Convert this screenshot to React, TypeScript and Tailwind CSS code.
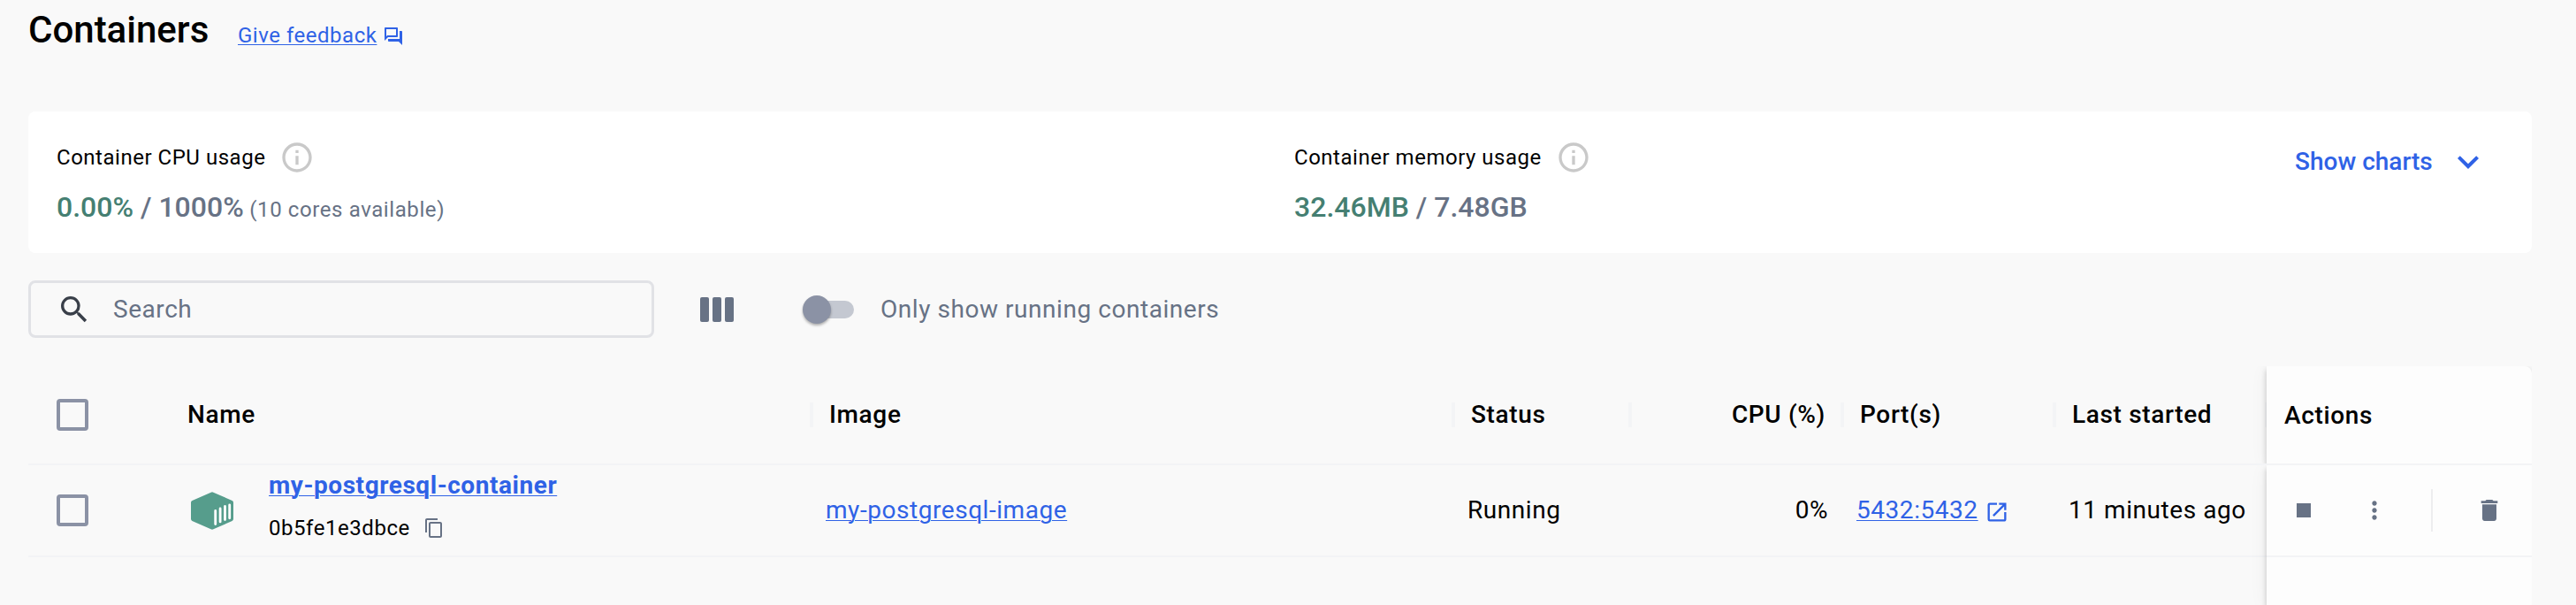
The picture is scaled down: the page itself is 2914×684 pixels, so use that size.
import React from "react";
import {
  MdInfoOutline,
  MdSearch,
  MdStop,
  MdMoreVert,
  MdDelete,
  MdOpenInNew,
  MdOutlineQuestionAnswer,
  MdContentCopy,
  MdExpandMore,
} from "react-icons/md";

function Usage({ label, used, total, note }: { label: string; used: string; total: string; note?: string }) {
  return (
    <div className="w-[1400px] pt-[32px]">
      <div className="flex h-[40px] items-center text-[24px] tracking-[0.52px] text-black">
        <span>{label}</span>
        <MdInfoOutline className="ml-[16px] size-[40px] text-[#c9c9c9]" />
      </div>
      <div className="mt-[14px] h-[44px] whitespace-pre text-[32px] font-medium leading-[44px] text-[#677285]">
        <span className="text-[#457f72]">{used}</span>
        {" / "}
        {total}
        {note && <span className="text-[24px] font-normal tracking-[0.6px]"> {note}</span>}
      </div>
    </div>
  );
}

function Checkbox() {
  return <span className="block size-[36px] rounded-[4px] border-4 border-[#8b92a5]" />;
}

function Divider() {
  return <span className="h-[28px] w-[4px] shrink-0 bg-[#f3f4f6]" />;
}

function ContainerIcon() {
  return (
    <svg viewBox="0 0 48 43" className="ml-[4px] h-[43px] w-[48px] shrink-0">
      <path
        d="M22.600.700a3 3 0 0 1 2.800 0l21.200 9.300A2.400 2.400 0 0 1 48 12.200v18.600a2.400 2.400 0 0 1-1.400 2.200L25.400 42.300a3 3 0 0 1-2.800 0L1.400 33A2.400 2.400 0 0 1 0 30.800V12.200A2.400 2.400 0 0 1 1.400 10z"
        fill="#569d8c"
      />
      <path d="M27.700 21.500v15M33.100 18.900v15M38.500 16.500v15M43.700 14.800v15" stroke="#fff" strokeWidth="2.800" strokeLinecap="round" />
    </svg>
  );
}

const columns = "grid grid-cols-[180px_704px_726px_200px_240px_240px_242px] items-center";
const link = "text-[#2f62e6] underline decoration-1 underline-offset-[2px]";

export default function App() {
  return (
    <div className="h-[684px] w-full overflow-hidden bg-[#f9f9f9] px-[32px] font-[Roboto,sans-serif] text-black">
      <header className="flex h-[126px] items-start">
        <h1 className="w-[237px] pt-[6px] text-[42px] font-medium leading-[56px]">Containers</h1>
        <a className="mt-[24px] flex items-center text-[24px] leading-[32px] tracking-[0.52px] text-[#2f62e6]">
          <span className={link}>Give feedback</span>
          <MdOutlineQuestionAnswer className="ml-[7px] mt-[2px] size-[24px]" />
        </a>
      </header>

      <section className="flex h-[160px] w-[2832px] rounded-[8px] bg-white pl-[32px]">
        <Usage label="Container CPU usage" used="0.00%" total="1000%" note="(10 cores available)" />
        <div className="w-[1132px]">
          <Usage label="Container memory usage" used="32.46MB" total="7.48GB" />
        </div>
        <button className="flex h-[113px] items-center text-[28px] font-medium text-[#2f62e6]">
          Show charts
          <MdExpandMore className="ml-[16px] size-[48px]" />
        </button>
      </section>

      <div className="mt-[31px] flex h-[65px] items-center text-[28px] tracking-[0.55px] text-[#677285]">
        <div className="flex h-[65px] w-[708px] items-center rounded-[8px] border-[3px] border-[#e1e2e6] pl-[29px]">
          <MdSearch className="size-[40px] text-[#393f49]" />
          <span className="ml-[24px]">Search</span>
        </div>
        <span className="ml-[52px] flex gap-[4px] pt-px">
          <i className="h-[28px] w-[10px] rounded-[2px] bg-[#677285]" />
          <i className="h-[28px] w-[10px] rounded-[2px] bg-[#677285]" />
          <i className="h-[28px] w-[10px] rounded-[2px] bg-[#677285]" />
        </span>
        <span className="ml-[94px] mt-px flex h-[20px] w-[42px] items-center rounded-r-full bg-[#c4c8d1]">
          <i className="-ml-[16px] size-[32px] shrink-0 rounded-full bg-[#8b92a5] shadow-[0_2px_3px_rgba(0,0,0,0.3)]" />
        </span>
        <span className="ml-[30px]">Only show running containers</span>
      </div>

      <main className="mt-[32px] flex h-[270px] w-[2832px]">
        <div className="w-[2532px]">
          <div className={`${columns} h-[112px] border-b-2 border-[#f3f4f6] text-[28px] font-medium tracking-[0.65px]`}>
            <div className="pl-[32px]"><Checkbox /></div>
            <div>Name</div>
            <div className="flex items-center"><Divider /><span className="ml-[18px]">Image</span></div>
            <div className="flex items-center"><Divider /><span className="ml-[18px]">Status</span></div>
            <div className="flex items-center"><Divider /><span className="ml-auto mr-[17px]">CPU (%)</span></div>
            <div className="flex items-center"><Divider /><span className="ml-[18px]">Port(s)</span></div>
            <div className="flex items-center">
              <Divider />
              <span className="ml-[18px] mr-auto">Last started</span>
              <span className="h-[28px] w-[2px] bg-[#f3f4f6]" />
            </div>
          </div>
          <div className={`${columns} h-[104px] border-b-2 border-[#f3f4f6] text-[28px] tracking-[0.55px]`}>
            <div className="pl-[32px]"><Checkbox /></div>
            <div className="flex items-center">
              <ContainerIcon />
              <div className="-mt-px mb-[7px] ml-[40px]">
                <div className={`text-[28px] font-bold leading-[48px] ${link}`}>my-postgresql-container</div>
                <div className="flex h-[48px] items-center text-[24px] tracking-[0.55px]">
                  0b5fe1e3dbce
                  <MdContentCopy className="ml-[15px] size-[24px] text-[#677285]" />
                </div>
              </div>
            </div>
            <div className={`pl-[18px] ${link}`}>my-postgresql-image</div>
            <div className="pl-[18px]">Running</div>
            <div className="pr-[14px] text-right">0%</div>
            <div className="flex items-center pl-[18px] text-[#2f62e6]">
              <span className={link}>5432:5432</span>
              <MdOpenInNew className="ml-[7px] mt-[4px] size-[28px]" />
            </div>
            <div className="pl-[18px]">11 minutes ago</div>
          </div>
        </div>
        <aside className="w-[300px]">
          <div className="flex h-[110px] items-center rounded-tr-[8px] bg-[#fdfdfd] pl-[20px] pt-[2px] text-[28px] font-medium tracking-[0.65px] shadow-[0_4px_6px_rgba(0,0,0,0.2),0_2px_20px_rgba(0,0,0,0.06)] [clip-path:inset(0_0_0_-20px)]">
            Actions
          </div>
          <div className="h-[2px] bg-[#f3f4f6]" />
          <div className="h-[158px] bg-[#fdfdfd] shadow-[0_4px_6px_rgba(0,0,0,0.2),0_2px_20px_rgba(0,0,0,0.06)] [clip-path:inset(0_0_0_-20px)]">
            <div className="flex h-[104px] items-center border-b-2 border-[#f3f4f6] pl-[26px] text-[#677285]">
              <MdStop className="size-[32px]" />
              <MdMoreVert className="ml-[48px] size-[32px]" />
              <span className="ml-[48px] h-[48px] w-[2px] bg-[#ededef]" />
              <MdDelete className="ml-[48px] size-[32px]" />
            </div>
          </div>
        </aside>
      </main>
    </div>
  );
}
